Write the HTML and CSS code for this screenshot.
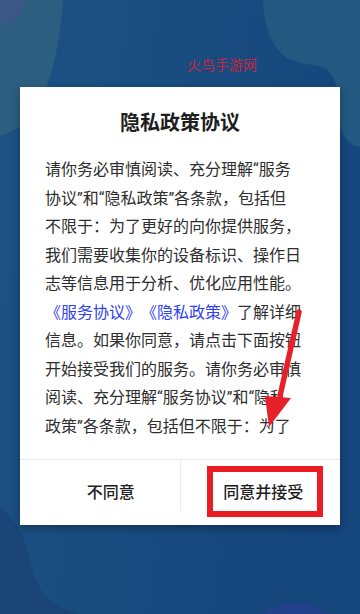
FILE: index.html
```html
<!DOCTYPE html>
<html lang="zh-CN">
<head>
<meta charset="utf-8">
<title>隐私政策协议</title>
<link rel="stylesheet" href="styles.css">
</head>
<body>
<div class="page">
  <svg class="backdrop" viewBox="0 0 360 614" preserveAspectRatio="none" aria-hidden="true">
    <defs>
      <linearGradient id="bg" x1="0" y1="0" x2="1" y2="0.3">
        <stop offset="0" stop-color="#1d5283"/>
        <stop offset="1" stop-color="#15467c"/>
      </linearGradient>
    </defs>
    <rect width="360" height="614" fill="url(#bg)"/>
    <path d="M0,0 H63 C60,40 54,70 42,98 C32,120 16,132 0,136 Z" fill="#2c5e80"/>
    <circle cx="0" cy="0" r="25" fill="#3a5886"/>
    <path d="M263,0 C264,34 276,58 300,63 L318,66 C332,69 338,82 338,100 L340,124 C342,138 350,145 360,147 V0 Z" fill="#235880"/>
    <path d="M0,508 C16,518 26,540 32,568 C38,594 54,607 80,614 H0 Z" fill="#1a4576"/>
    <ellipse cx="295" cy="652" rx="52" ry="49" fill="#22408b"/>
  </svg>

  <span class="watermark">火鸟手游网</span>

  <div class="dialog">
    <h1 class="title">隐私政策协议</h1>
    <div class="content">
      <p class="text">请你务必审慎阅读、充分理解“服务<br>协议”和“隐私政策”各条款，包括但<br>不限于：为了更好的向你提供服务，<br>我们需要收集你的设备标识、操作日<br>志等信息用于分析、优化应用性能。<br><a class="link">《服务协议》</a><a class="link">《隐私政策》</a>了解详细<br>信息。如果你同意，请点击下面按钮<br>开始接受我们的服务。请你务必审慎<br>阅读、充分理解“服务协议”和“隐私<br>政策”各条款，包括但不限于：为了</p>
    </div>
    <div class="actions">
      <button class="btn btn-decline">不同意</button>
      <span class="divider"></span>
      <button class="btn btn-accept">同意并接受<span class="highlight"></span></button>
    </div>
  </div>

  <svg class="arrow" viewBox="255 305 45 130" aria-hidden="true">
    <line x1="299" y1="312" x2="280" y2="396" stroke="#e8202a" stroke-width="5.5" stroke-linecap="round"/>
    <polygon points="269,427 265,396 291,398" fill="#e8202a"/>
  </svg>
</div>
</body>
</html>
```

FILE: styles.css
```css
* {
  box-sizing: border-box;
}

html,
body {
  margin: 0;
  padding: 0;
}

body {
  font-family: Roboto, "Noto Sans CJK SC", sans-serif;
  background: #184b7f;
}

.page {
  position: relative;
  width: 360px;
  height: 614px;
  overflow: hidden;
  padding: 87px 20px 0;
}

.backdrop {
  position: absolute;
  left: 0;
  top: 0;
  width: 360px;
  height: 614px;
  z-index: 0;
}

.watermark {
  position: absolute;
  left: 187px;
  top: 56px;
  font-size: 14px;
  line-height: 18px;
  color: #c0283f;
  z-index: 1;
}

.dialog {
  position: relative;
  z-index: 1;
  width: 320px;
  height: 438px;
  background: #fff;
  display: flex;
  flex-direction: column;
  box-shadow: 0 3px 8px rgba(0, 0, 0, 0.3);
}

.title {
  margin: 0;
  padding-top: 24px;
  height: 48px;
  font-size: 20px;
  line-height: 24px;
  font-weight: 700;
  color: #1e1e1e;
  text-align: center;
}

.content {
  margin-top: 21px;
  height: 285px;
  overflow: hidden;
  padding-left: 25px;
}

.text {
  margin: 0;
  font-size: 16px;
  line-height: 28.5px;
  color: #2e2e2e;
  white-space: nowrap;
  text-spacing-trim: space-all;
}

.link {
  color: #2f3ff2;
  text-decoration: none;
}

.actions {
  margin-top: 18px;
  height: 66px;
  border-top: 1px solid #e9e9e9;
  display: grid;
  grid-template-columns: 1fr 1px 1fr;
}

.btn {
  border: 0;
  margin: 0;
  background: transparent;
  font-family: Roboto, "Noto Sans CJK SC", sans-serif;
  font-size: 16px;
  font-weight: 500;
  color: #1e1e1e;
  padding: 0;
  line-height: 20px;
  min-width: 0;
}

.btn-decline {
  padding-left: 22px;
}

.btn-accept {
  position: relative;
  padding-left: 6px;
}

.divider {
  width: 1px;
  height: 51px;
  background: #ececec;
  align-self: start;
}

.highlight {
  position: absolute;
  left: 26px;
  top: 6px;
  width: 116px;
  height: 51px;
  border: 6px solid #ea1c24;
}

.arrow {
  position: absolute;
  left: 255px;
  top: 305px;
  width: 45px;
  height: 130px;
  z-index: 2;
  overflow: visible;
}
```
